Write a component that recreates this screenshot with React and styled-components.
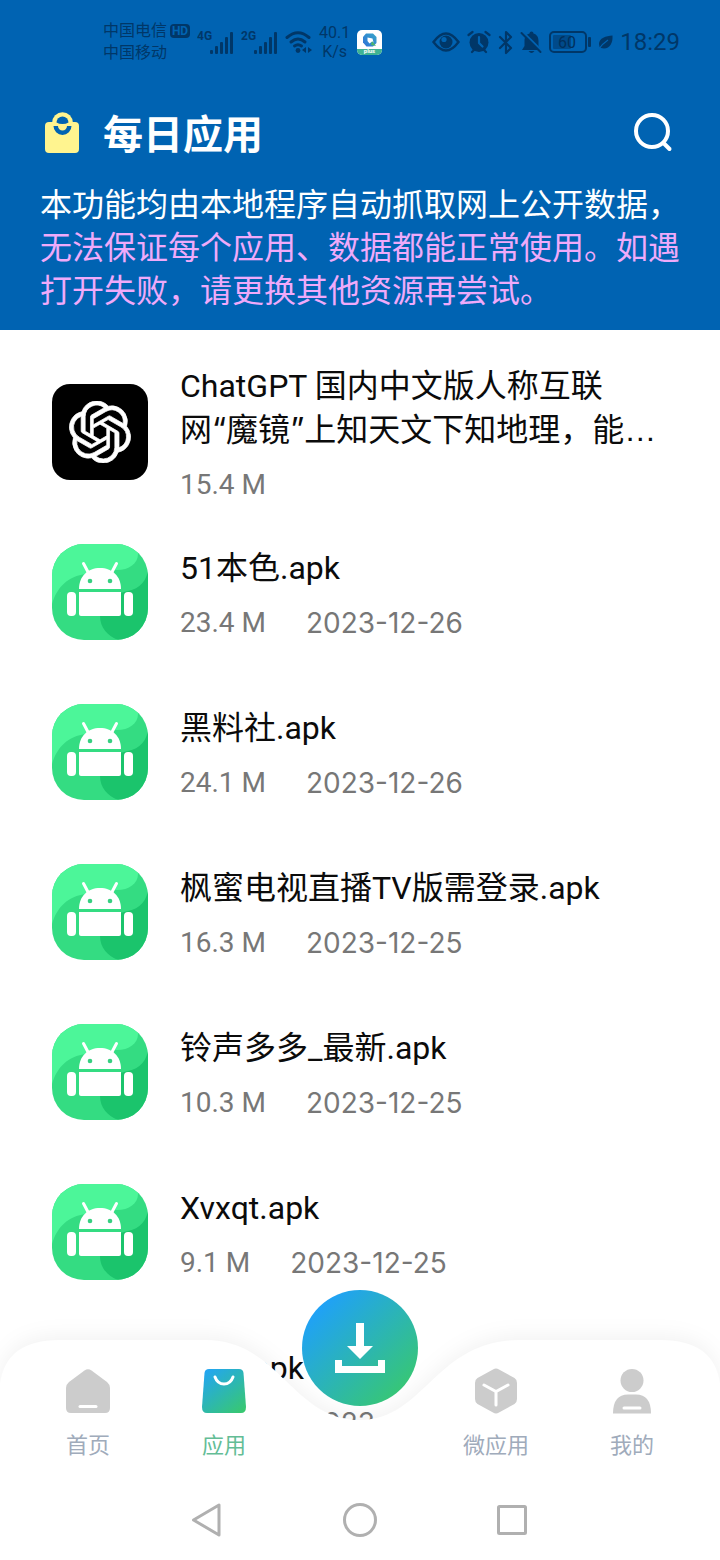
import React from "react";
import styled, { createGlobalStyle } from "styled-components";
import { SiOpenai } from "react-icons/si";

const GlobalStyle = createGlobalStyle`
  * { box-sizing: border-box; }
  body {
    margin: 0;
    background: #fff;
    font-family: Roboto, "Noto Sans CJK SC", sans-serif;
    color: #0b0b0b;
  }
  button {
    border: 0;
    padding: 0;
    background: none;
    font: inherit;
    color: inherit;
    cursor: pointer;
  }
  svg { display: block; flex: none; }
  h1, h2, p, ul { margin: 0; padding: 0; }
`;

const Screen = styled.div`
  position: relative;
  display: flex;
  flex-direction: column;
  height: 100vh;
  overflow: hidden;
`;

const Header = styled.header`
  flex: none;
  background: #0063b2;
  padding-bottom: 17px;
`;

const StatusBar = styled.div`
  display: flex;
  align-items: center;
  justify-content: space-between;
  height: 84px;
  padding: 0 40px 0 103px;
  color: #003768;
`;

const StatusGroup = styled.div`
  display: flex;
  align-items: center;
  gap: 7px;
`;

const Carriers = styled.div`
  font-size: 16px;
  line-height: 22px;
`;

const CarrierLine = styled.div`
  display: flex;
  align-items: center;
  gap: 3px;
`;

const HdBadge = styled.span`
  border-radius: 4px;
  background: #003768;
  color: #0063b2;
  font-size: 12px;
  font-weight: 700;
  line-height: 14px;
  width: 20px;
  text-align: center;
`;

const Speed = styled.div`
  font-size: 16px;
  line-height: 19px;
  text-align: center;
`;

const Clock = styled.time`
  font-size: 24px;
  line-height: 28px;
`;

const TitleRow = styled.div`
  display: flex;
  align-items: center;
  height: 98px;
  padding: 0 45px;
  gap: 24px;
`;

const Title = styled.h1`
  flex: 1;
  padding-top: 5px;
  color: #fff;
  font-size: 40px;
  font-weight: 700;
  line-height: 56px;
`;

const SearchButton = styled.button`
  width: 44px;
  height: 44px;
`;

const Notice = styled.p`
  padding: 2px 40px 0;
  color: #fff;
  font-size: 32px;
  line-height: 43px;
`;

const Warning = styled.span`
  color: #efaafa;
`;

const List = styled.ul`
  flex: 1;
  min-height: 0;
  overflow: hidden;
  list-style: none;
  padding: 22px 52px 0;
`;

const Row = styled.li`
  display: flex;
  align-items: center;
  gap: 32px;
  height: 160px;
`;

const Tile = styled.div`
  display: flex;
  align-items: center;
  justify-content: center;
  flex: none;
  width: 96px;
  height: 96px;
  overflow: hidden;
  border-radius: ${(p) => (p.$dark ? 18 : 32)}px;
  background: ${(p) => (p.$dark ? "#000" : "#34dc82")};
  color: #fff;
`;

const Info = styled.div`
  flex: 1;
  min-width: 0;
  max-width: 480px;
  padding-top: 5px;
`;

const Name = styled.h2`
  font-size: 32px;
  font-weight: 400;
  line-height: 43px;
`;

const Quote = styled.span`
  font-family: Inter, sans-serif;
`;

const Ellipsis = styled.span`
  font-family: "Liberation Sans", sans-serif;
`;

const Meta = styled.div`
  display: flex;
  gap: 40px;
  margin-top: 14px;
  color: #777;
  font-size: 28px;
  line-height: 38px;
`;

const DateText = styled.time`
  font-family: Inter, sans-serif;
`;

const Bottom = styled.footer`
  position: absolute;
  left: 0;
  right: 0;
  bottom: 0;
`;

const BarShape = styled.svg`
  position: absolute;
  inset: 0;
  width: 100%;
  height: 100%;
  overflow: visible;
  filter: drop-shadow(0 -4px 10px rgba(0, 0, 0, 0.05));
`;

const Tabs = styled.nav`
  position: relative;
  display: grid;
  grid-template-columns: repeat(5, 1fr);
  height: 140px;
  padding: 0 20px;
`;

const Tab = styled.button`
  display: flex;
  flex-direction: column;
  align-items: center;
  gap: 16px;
  padding-top: 28px;
  color: ${(p) => (p.$active ? "#63bd96" : "#a0abbb")};
  font-size: 22px;
  line-height: 32px;
`;

const DownloadButton = styled.button`
  display: flex;
  align-items: center;
  justify-content: center;
  justify-self: center;
  width: 116px;
  height: 116px;
  margin-top: -50px;
  border-radius: 50%;
  background: linear-gradient(135deg, #1e9fff 10%, #38c870 90%);
`;

const SystemNav = styled.div`
  position: relative;
  display: flex;
  justify-content: center;
  height: 80px;
`;

const SystemButton = styled.button`
  display: flex;
  align-items: center;
  justify-content: center;
  width: 152px;
`;

const Signal = ({ label }) => (
  <svg width="37" height="28" viewBox="0 0 37 28" fill="#003768" aria-hidden="true">
    <text x="0" y="12" fontSize="12" fontWeight="700" fontFamily="Roboto, sans-serif">{label}</text>
    <rect x="13" y="22" width="3" height="4" rx="1" />
    <rect x="18" y="18" width="3" height="8" rx="1" />
    <rect x="23" y="14" width="3" height="12" rx="1" />
    <rect x="28" y="9" width="3" height="17" rx="1" />
    <rect x="33" y="4" width="3" height="22" rx="1" />
  </svg>
);

const Wifi = () => (
  <svg width="27" height="24" viewBox="0 0 27 24" fill="none" stroke="#003768" strokeWidth="3" strokeLinecap="round" aria-hidden="true">
    <path d="M2 7.500Q13 -2 24 7.500" />
    <path d="M6 12Q13 6 20 12" />
    <path d="M9.500 16Q13 13.500 16.500 16" />
    <circle cx="13" cy="20.500" r="2.400" fill="#003768" stroke="none" />
    <path d="M21 17v6l-4-3zM23 17v6l4-3z" fill="#003768" stroke="none" />
  </svg>
);

const PlusLogo = () => (
  <svg width="25" height="25" viewBox="0 0 25 25" aria-hidden="true">
    <defs>
      <clipPath id="logoClip"><rect width="25" height="25" rx="5" /></clipPath>
      <linearGradient id="logoRing" x1="0" y1="1" x2="1" y2="0">
        <stop offset="0" stopColor="#2e71d8" />
        <stop offset="1" stopColor="#37a6c8" />
      </linearGradient>
    </defs>
    <g clipPath="url(#logoClip)">
      <rect width="25" height="25" fill="#fff" />
      <path d="M9 3.500h7l3.500 3.500v6L16 16.500H9.500L6 12.500V7z" fill="url(#logoRing)" />
      <path d="M10.500 7.500l5 1 1 4-2-0.500-2 1.500-2-2.500z" fill="#fff" />
      <path d="M15 11l4 5-5-1z" fill="#4bb56e" />
      <path d="M0 19h25v6H0z" fill="#3fb394" />
      <text x="12.500" y="23" fontSize="6" fontWeight="700" textAnchor="middle" fill="#fff" fontFamily="Roboto, sans-serif">plus</text>
    </g>
  </svg>
);

const Eye = () => (
  <svg width="28" height="20" viewBox="0 0 28 20" aria-hidden="true">
    <path d="M1.500 10Q14-7 26.500 10Q14 27 1.500 10z" fill="none" stroke="#003768" strokeWidth="2.400" />
    <circle cx="14" cy="10" r="6.500" fill="#003768" />
    <circle cx="12" cy="7.500" r="2.600" fill="#0063b2" />
  </svg>
);

const Alarm = () => (
  <svg width="24" height="24" viewBox="0 0 24 24" fill="none" stroke="#003768" strokeWidth="2.200" strokeLinecap="round" aria-hidden="true">
    <circle cx="12" cy="12.500" r="9.500" fill="#003768" stroke="none" />
    <path d="M1.500 5l4-3M22.500 5l-4-3M5 22l2-2M19 22l-2-2" />
    <path d="M12 7v6l3.500 3.500" stroke="#0063b2" />
  </svg>
);

const Bluetooth = () => (
  <svg width="15" height="25" viewBox="0 0 15 25" fill="none" stroke="#003768" strokeWidth="2.200" strokeLinejoin="round" strokeLinecap="round" aria-hidden="true">
    <path d="M2 7l11 11-5 5V2l5 5L2 18" />
  </svg>
);

const BellOff = () => (
  <svg width="22" height="24" viewBox="0 0 22 24" aria-hidden="true">
    <path d="M11.500 1.500a2 2 0 0 1 2 2c3.500 1 5 4 5 7.500v5l2.500 4H2l2.500-4v-5c0-3.500 1.500-6.500 5-7.500a2 2 0 0 1 2-2zM8.500 21h6q-3 4-6 0z" fill="#003768" />
    <path d="M3 2l19 19" stroke="#0063b2" strokeWidth="2" />
    <path d="M1.500 3l19 19" stroke="#003768" strokeWidth="2" strokeLinecap="round" />
  </svg>
);

const Battery = () => (
  <svg width="42" height="22" viewBox="0 0 42 22" aria-hidden="true">
    <rect x="1" y="1" width="36" height="20" rx="4" fill="none" stroke="#003768" strokeWidth="2" />
    <rect x="4" y="4" width="18" height="14" rx="1" fill="#004a8a" />
    <rect x="39" y="6" width="3" height="10" rx="1" fill="#003768" />
    <text x="18" y="17" fontSize="16" textAnchor="middle" fill="#00305c" fontFamily="Roboto, sans-serif">60</text>
  </svg>
);

const Leaf = () => (
  <svg width="15" height="15" viewBox="0 0 15 15" aria-hidden="true">
    <path d="M14.500 0.500C8 1 1 3 1 9q0 3 2 4C11 15 15 9 14.500 0.500z" fill="#003768" />
    <path d="M0.500 14.500Q4 9 10 5" fill="none" stroke="#0063b2" strokeWidth="1.200" />
  </svg>
);

const Bag = () => (
  <svg width="34" height="42" viewBox="0 0 34 42" aria-hidden="true">
    <rect y="10" width="34" height="31" rx="4" fill="#fff48f" />
    <circle cx="17.500" cy="10.500" r="10.300" fill="#fff48f" />
    <path d="M11.500 10.500a6 6 0 0 1 12 0q-2.500 1.500-6 1.500t-6-1.500z" fill="#0063b2" />
    <path d="M8.500 14h4.500a4.500 4.500 0 0 0 9 0h4.500a9 9 0 0 1-18 0z" fill="#0063b2" />
  </svg>
);

const SearchIcon = () => (
  <svg width="44" height="44" viewBox="0 0 44 44" fill="none" stroke="#fff" strokeWidth="4" strokeLinecap="round" aria-hidden="true">
    <circle cx="21" cy="20" r="16" />
    <path d="M32.500 32l6 6" />
  </svg>
);

const Android = () => (
  <svg width="96" height="96" viewBox="0 0 96 96" aria-hidden="true">
    <path d="M0 60C5 43 16 32 34 30C45 28 50 26 62 26C76 27 86 20 86 10C86 5 84 2 80 0H0z" fill="#4cf699" />
    <path d="M96 27C93 41 84 46 72 48C57 51 48 60 48 72C48 84 56 92 66 96H96z" fill="#1bc46c" />
    <path d="M31.500 19.500L36 28M64.500 19.500L60 28" stroke="#fff" strokeWidth="3" strokeLinecap="round" />
    <path d="M27 45C27 32 36 24 48 24S69 32 69 45z" fill="#fff" />
    <path d="M27 48h42v22q0 2-2 2H29q-2 0-2-2z" fill="#fff" />
    <rect x="15" y="48" width="9" height="24" rx="4" fill="#fff" />
    <rect x="72" y="48" width="9" height="24" rx="4" fill="#fff" />
    <circle cx="38" cy="37" r="2.300" fill="#37cf80" />
    <circle cx="58" cy="37" r="2.300" fill="#37cf80" />
  </svg>
);

const HomeIcon = () => (
  <svg width="46" height="46" viewBox="0 0 46 46" aria-hidden="true">
    <path d="M19.500 2.500q3.500-2.500 7 0L42 14q3 2.500 3 6v20q0 5-5 5H6q-5 0-5-5V20q0-3.500 3-6z" fill="#ccc" />
    <path d="M15 38.500h16" stroke="#fff" strokeWidth="3" strokeLinecap="round" />
  </svg>
);

const AppsIcon = () => (
  <svg width="46" height="46" viewBox="0 0 46 46" aria-hidden="true">
    <defs>
      <linearGradient id="apps" x1="0.100" y1="0" x2="0.900" y2="1">
        <stop offset="0" stopColor="#22a5f4" />
        <stop offset="1" stopColor="#38c870" />
      </linearGradient>
    </defs>
    <path d="M8 1h30q4 0 4.500 4L45 39q0 6-5 6H6q-5 0-5-6L3.500 5Q4 1 8 1z" fill="url(#apps)" />
    <path d="M14 9q2.500 7 9 7t9-7" fill="none" stroke="#fff" strokeWidth="3" strokeLinecap="round" />
  </svg>
);

const CubeIcon = () => (
  <svg width="46" height="46" viewBox="0 0 46 46" aria-hidden="true">
    <path d="M20 1.500q3-2 6 0l15.500 8.500q2.500 1.500 2.500 5v16q0 3.500-2.500 5L26 44.500q-3 2-6 0L4.500 36Q2 34.500 2 31V15q0-3.500 2.500-5z" fill="#ccc" />
    <path d="M11 17l12 6.500L35 17M23 23.500V37" fill="none" stroke="#fff" strokeWidth="3" strokeLinecap="round" />
  </svg>
);

const UserIcon = () => (
  <svg width="46" height="46" viewBox="0 0 46 46" aria-hidden="true">
    <circle cx="23" cy="12.500" r="11.500" fill="#ccc" />
    <path d="M4 45.500Q4 26.500 19 26.500h8q15 0 15 19z" fill="#ccc" />
    <path d="M15 40h16" stroke="#fff" strokeWidth="3" strokeLinecap="round" />
  </svg>
);

const DownloadIcon = () => (
  <svg width="50" height="50" viewBox="0 0 50 50" fill="#fff" aria-hidden="true">
    <path d="M21 0h8v23h9L25 36 12 23h9zM0 37h7v6h36v-6h7v13H0z" />
  </svg>
);

const apps = [
  { name: "51本色.apk", size: "23.4 M", date: "2023-12-26" },
  { name: "黑料社.apk", size: "24.1 M", date: "2023-12-26" },
  { name: "枫蜜电视直播TV版需登录.apk", size: "16.3 M", date: "2023-12-25" },
  { name: "铃声多多_最新.apk", size: "10.3 M", date: "2023-12-25" },
  { name: "Xvxqt.apk", size: "9.1 M", date: "2023-12-25" },
  { name: "音乐.apk", size: "12.6 M", date: "2023-12-25" },
];

const tabsLeft = [
  { label: "首页", Icon: HomeIcon },
  { label: "应用", Icon: AppsIcon, active: true },
];
const tabsRight = [
  { label: "微应用", Icon: CubeIcon },
  { label: "我的", Icon: UserIcon },
];

const renderTab = ({ label, Icon, active }) => (
  <Tab key={label} $active={active} type="button">
    <Icon />
    {label}
  </Tab>
);

export default function App() {
  return (
    <Screen>
      <GlobalStyle />
      <Header>
        <StatusBar>
          <StatusGroup>
            <Carriers>
              <CarrierLine>中国电信<HdBadge>HD</HdBadge></CarrierLine>
              <CarrierLine>中国移动</CarrierLine>
            </Carriers>
            <Signal label="4G" />
            <Signal label="2G" />
            <Wifi />
            <Speed>40.1<br />K/s</Speed>
            <PlusLogo />
          </StatusGroup>
          <StatusGroup>
            <Eye />
            <Alarm />
            <Bluetooth />
            <BellOff />
            <Battery />
            <Leaf />
            <Clock>18:29</Clock>
          </StatusGroup>
        </StatusBar>
        <TitleRow>
          <Bag />
          <Title>每日应用</Title>
          <SearchButton type="button" aria-label="搜索"><SearchIcon /></SearchButton>
        </TitleRow>
        <Notice>
          本功能均由本地程序自动抓取网上公开数据，
          <Warning>无法保证每个应用、数据都能正常使用。如遇打开失败，请更换其他资源再尝试。</Warning>
        </Notice>
      </Header>
      <List>
        <Row>
          <Tile $dark><SiOpenai size={62} stroke="#fff" strokeWidth={0.3} /></Tile>
          <Info>
            <Name>
              ChatGPT 国内中文版人称互联网<Quote>“</Quote>魔镜<Quote>”</Quote>上知天文下知地理，能<Ellipsis>…</Ellipsis>
            </Name>
            <Meta>15.4 M</Meta>
          </Info>
        </Row>
        {apps.map((app) => (
          <Row key={app.name}>
            <Tile><Android /></Tile>
            <Info>
              <Name>{app.name}</Name>
              <Meta>
                <span>{app.size}</span>
                <DateText>{app.date}</DateText>
              </Meta>
            </Info>
          </Row>
        ))}
      </List>
      <Bottom>
        <BarShape viewBox="0 0 720 220" preserveAspectRatio="none" aria-hidden="true">
          <path d="M0 220V44C4 14 24 0 60 0H205C280 0 292 80 360 80C425 80 435 0 520 0H660C696 0 716 14 720 44V220z" fill="#fff" />
        </BarShape>
        <Tabs>
          {tabsLeft.map(renderTab)}
          <DownloadButton type="button" aria-label="下载"><DownloadIcon /></DownloadButton>
          {tabsRight.map(renderTab)}
        </Tabs>
        <SystemNav>
          <SystemButton type="button" aria-label="返回">
            <svg width="32" height="36" viewBox="0 0 32 36" fill="none" stroke="#b0b0b0" strokeWidth="3" strokeLinejoin="round"><path d="M27 3v30L1.500 18z" /></svg>
          </SystemButton>
          <SystemButton type="button" aria-label="主屏幕">
            <svg width="36" height="36" viewBox="0 0 36 36" fill="none" stroke="#b0b0b0" strokeWidth="3"><circle cx="18" cy="18" r="15.500" /></svg>
          </SystemButton>
          <SystemButton type="button" aria-label="最近任务">
            <svg width="32" height="32" viewBox="0 0 32 32" fill="none" stroke="#b0b0b0" strokeWidth="3"><rect x="2.500" y="2.500" width="27" height="27" rx="1" /></svg>
          </SystemButton>
        </SystemNav>
      </Bottom>
    </Screen>
  );
}
